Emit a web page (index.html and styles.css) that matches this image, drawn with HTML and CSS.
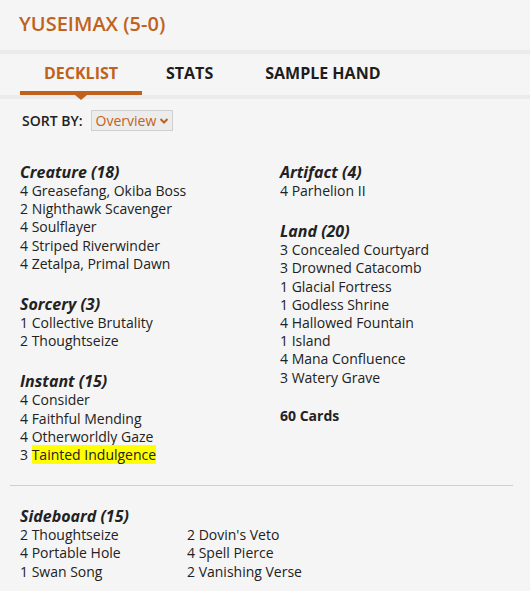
FILE: index.html
```html
<!DOCTYPE html>
<html>
<head>
<meta charset="utf-8">
<link rel="stylesheet" href="styles.css">
</head>
<body>
<div class="panel">
  <header class="head">
    <h1 class="title">YUSEIMAX (5-0)</h1>
  </header>
  <div class="band"></div>
  <nav class="tabs">
    <div class="tab active">DECKLIST</div>
    <div class="tab">STATS</div>
    <div class="tab">SAMPLE HAND</div>
  </nav>
  <div class="band"></div>
  <div class="sort">
    <span class="sort-label">SORT BY:</span>
    <div class="select">
      <span>Overview</span>
      <svg class="chev" width="10" height="8" viewBox="0 0 10 8"><path d="M1.5 2 L5 5.5 L8.5 2" fill="none" stroke="#c1621c" stroke-width="2"/></svg>
    </div>
  </div>
  <div class="deck">
    <div class="col">
      <div class="group">
        <h3 class="gh">Creature (18)</h3>
        <div class="card">4 Greasefang, Okiba Boss</div>
        <div class="card">2 Nighthawk Scavenger</div>
        <div class="card">4 Soulflayer</div>
        <div class="card">4 Striped Riverwinder</div>
        <div class="card">4 Zetalpa, Primal Dawn</div>
      </div>
      <div class="group">
        <h3 class="gh">Sorcery (3)</h3>
        <div class="card">1 Collective Brutality</div>
        <div class="card">2 Thoughtseize</div>
      </div>
      <div class="group">
        <h3 class="gh">Instant (15)</h3>
        <div class="card">4 Consider</div>
        <div class="card">4 Faithful Mending</div>
        <div class="card">4 Otherworldly Gaze</div>
        <div class="card">3 <span class="hl">Tainted Indulgence</span></div>
      </div>
    </div>
    <div class="col">
      <div class="group">
        <h3 class="gh">Artifact (4)</h3>
        <div class="card">4 Parhelion II</div>
      </div>
      <div class="group">
        <h3 class="gh">Land (20)</h3>
        <div class="card">3 Concealed Courtyard</div>
        <div class="card">3 Drowned Catacomb</div>
        <div class="card">1 Glacial Fortress</div>
        <div class="card">1 Godless Shrine</div>
        <div class="card">4 Hallowed Fountain</div>
        <div class="card">1 Island</div>
        <div class="card">4 Mana Confluence</div>
        <div class="card">3 Watery Grave</div>
      </div>
      <div class="total">60 Cards</div>
    </div>
  </div>
  <hr class="rule">
  <div class="side">
    <h3 class="gh">Sideboard (15)</h3>
    <div class="side-grid">
      <div class="card">2 Thoughtseize</div>
      <div class="card">2 Dovin's Veto</div>
      <div class="card">4 Portable Hole</div>
      <div class="card">4 Spell Pierce</div>
      <div class="card">1 Swan Song</div>
      <div class="card">2 Vanishing Verse</div>
    </div>
  </div>
</div>
</body>
</html>
```

FILE: styles.css
```css
* { box-sizing: border-box; }
html, body { margin: 0; padding: 0; background: #ffffff; }
body {
  font-family: "Open Sans", "Noto Sans", sans-serif;
  color: #222;
  font-size: 14px;
}
.panel {
  width: 530px;
  background: #f5f5f5;
  padding-bottom: 10px;
}
.head {
  height: 50px;
  padding-left: 19px;
  display: flex;
  align-items: center;
}
.title {
  margin: 0;
  font-size: 20px;
  font-weight: 600;
  color: #c1621c;
  position: relative;
  top: -2px;
}
.band {
  height: 4px;
  background: #ebebeb;
}
.tabs {
  display: flex;
  height: 41px;
  padding-left: 20px;
}
.tab {
  position: relative;
  display: flex;
  align-items: center;
  font-size: 16px;
  font-weight: 700;
  color: #1d1d1d;
  height: 41px;
  padding: 0 24px 3px;
}
.tab:nth-child(2) { padding-right: 28px; }
.tab.active {
  color: #c1621c;
  width: 122px;
  justify-content: center;
  padding: 0;
  border-bottom: 4px solid #c1621c;
}
.tab.active::after {
  content: "";
  position: absolute;
  left: 50%;
  bottom: -9px;
  margin-left: -6px;
  border-left: 6px solid transparent;
  border-right: 6px solid transparent;
  border-top: 5px solid #c1621c;
}
.sort {
  display: flex;
  align-items: center;
  padding: 11px 0 0 22px;
  height: 32px;
}
.sort-label {
  font-size: 14px;
  font-weight: 600;
  color: #222;
  margin-right: 8px;
}
.select {
  display: flex;
  align-items: center;
  height: 21px;
  padding: 0 3px 0 4px;
  border: 1px solid #cfcfcf;
  background: #ececec;
  color: #c1621c;
  font-size: 14px;
}
.chev { margin-left: 3px; }
.deck {
  display: grid;
  grid-template-columns: 260px 250px;
  padding: 31px 0 0 20px;
}
.group { margin-bottom: 21px; }
.gh {
  margin: 0;
  font-size: 16px;
  font-weight: 700;
  font-style: italic;
  line-height: 20px;
  color: #222;
}
.card {
  line-height: 18.2px;
  font-size: 14px;
  color: #222;
}
.hl { background: #ffff00; }
.total {
  font-weight: 700;
  line-height: 18px;
  margin-top: -1px;
}
.rule {
  margin: 0 17px 0 10px;
  border: 0;
  border-top: 1px solid #cfcfcf;
  height: 0;
}
.side { padding: 20px 0 0 20px; }
.side-grid {
  display: grid;
  grid-template-columns: 167px 200px;
}
```
